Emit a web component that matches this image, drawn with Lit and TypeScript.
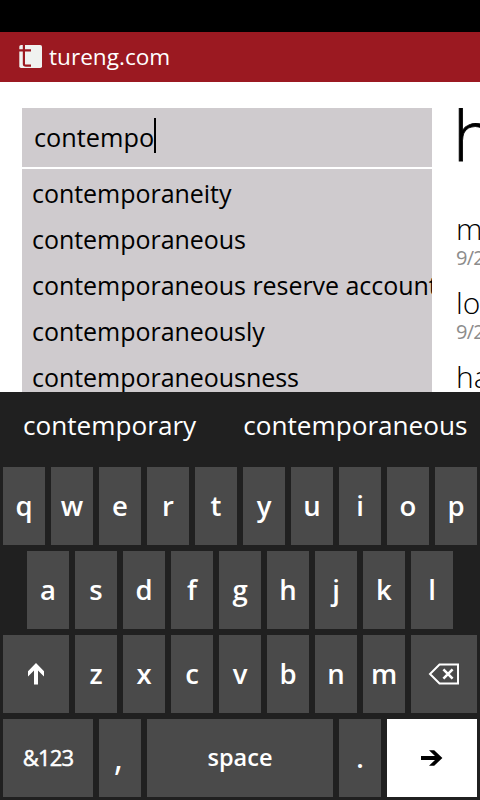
import { LitElement, css, html, svg } from 'lit';
import { customElement, property } from 'lit/decorators.js';

const suggestions = [
  'contemporaneity',
  'contemporaneous',
  'contemporaneous reserve account',
  'contemporaneously',
  'contemporaneousness',
];

const history = [
  { word: 'm', date: '9/2' },
  { word: 'lo', date: '9/2' },
  { word: 'ha', date: '' },
];

const icons: Record<string, unknown> = {
  shift: svg`<svg width="16" height="22" viewBox="0 0 16 22">
    <path d="M8 0 16 8.2V13.4L10 7.4V21.5H6V7.4L0 13.4V8.2Z" fill="#fff" />
  </svg>`,
  backspace: svg`<svg width="32" height="22" viewBox="0 0 32 22">
    <path d="M11.5 1.5H30V20.5H11.5L2 11Z" fill="none" stroke="#fff" stroke-width="2" />
    <path d="M15.4 6.4 24.6 15.6M24.6 6.4 15.4 15.6" stroke="#fff" stroke-width="2.6" />
  </svg>`,
  enter: svg`<svg width="22" height="16" viewBox="0 0 22 16">
    <path d="M0 6H14L8 .3H13.2L21.4 8 13.2 15.7H8L14 10H0Z" fill="#000" />
  </svg>`,
};

@customElement('title-bar')
export class TitleBar extends LitElement {
  render() {
    return html`
      <svg width="24" height="24" viewBox="0 0 24 24">
        <rect x=".3" y="0" width="22.7" height="23" rx="1.8" fill="#f0f2f0" />
        <path d="M0 5.4H12M4.9 0V19Q4.9 20.6 7 20.6H12" fill="none" stroke="#9b1921" stroke-width="2.2" />
      </svg>
      <span class="name">tureng.com</span>
    `;
  }

  static styles = css`
    :host {
      display: flex;
      align-items: center;
      gap: 6px;
      height: 50px;
      padding-left: 19px;
      background: #9b1921;
      color: #fff;
    }

    .name {
      padding-bottom: 2px;
      font-size: 22.6px;
    }
  `;
}

@customElement('search-panel')
export class SearchPanel extends LitElement {
  render() {
    return html`
      <div class="input"><span class="typed">contempo</span><span class="caret"></span></div>
      <div class="list">
        ${suggestions.map((s) => html`<div class="item">${s}</div>`)}
      </div>
    `;
  }

  static styles = css`
    :host {
      display: flex;
      flex-direction: column;
      gap: 2px;
      width: 410px;
      flex: none;
      color: #000;
      font-size: 25px;
    }

    .input {
      display: flex;
      align-items: center;
      height: 59px;
      padding: 0 0 4px 12px;
      background: #cfcbce;
      box-sizing: border-box;
    }

    .typed {
      padding-top: 3px;
      font-size: 25.3px;
    }

    .caret {
      width: 2px;
      height: 35px;
      background: #000;
    }

    .list {
      flex: 1;
      padding: 1px 0 0 10px;
      background: #cfcbce;
      overflow: hidden;
    }

    .item {
      height: 46px;
      line-height: 46px;
      letter-spacing: -0.04px;
      white-space: nowrap;
    }
  `;
}

@customElement('history-panel')
export class HistoryPanel extends LitElement {
  render() {
    return html`
      <div class="title">h</div>
      ${history.map(
        (h) => html`
          <div class="entry">
            <div class="word">${h.word}</div>
            <div class="date">${h.date}</div>
          </div>
        `
      )}
    `;
  }

  static styles = css`
    :host {
      display: block;
      flex: 1;
      min-width: 0;
      overflow: hidden;
      white-space: nowrap;
      font-weight: 300;
    }

    .title {
      height: 103px;
      margin-left: -3px;
      font-size: 70px;
      line-height: 52px;
      -webkit-text-stroke: 0.8px #000;
    }

    .entry {
      height: 74px;
    }

    .word {
      height: 36px;
      font-size: 30px;
      line-height: 36px;
    }

    .date {
      font-size: 20px;
      line-height: 22px;
      letter-spacing: -0.8px;
      color: #8c8c8c;
      font-weight: 400;
    }
  `;
}

@customElement('keyboard-key')
export class KeyboardKey extends LitElement {
  @property() label = '';

  render() {
    return icons[this.label] ?? html`${this.label}`;
  }

  static styles = css`
    :host {
      display: flex;
      align-items: center;
      justify-content: center;
      height: 78px;
      padding-bottom: 1px;
      background: #4a4a4a;
      color: #fff;
      font-size: 27.5px;
      font-weight: 600;
      box-sizing: border-box;
    }

    svg {
      display: block;
    }
  `;
}

@customElement('soft-keyboard')
export class SoftKeyboard extends LitElement {
  renderKeys(keys: string) {
    return [...keys].map((k) => html`<keyboard-key label=${k}></keyboard-key>`);
  }

  render() {
    return html`
      <div class="words">
        <span>contemporary</span>
        <span>contemporaneous</span>
      </div>
      <div class="row">${this.renderKeys('qwertyuiop')}</div>
      <div class="row">${this.renderKeys('asdfghjkl')}</div>
      <div class="row">
        <keyboard-key class="wide" label="shift"></keyboard-key>
        ${this.renderKeys('zxcvbnm')}
        <keyboard-key class="wide" label="backspace"></keyboard-key>
      </div>
      <div class="row">
        <keyboard-key class="mode" label="&amp;123"></keyboard-key>
        <keyboard-key class="comma" label=","></keyboard-key>
        <keyboard-key class="space" label="space"></keyboard-key>
        <keyboard-key label="."></keyboard-key>
        <keyboard-key class="enter" label="enter"></keyboard-key>
      </div>
    `;
  }

  static styles = css`
    :host {
      display: flex;
      flex-direction: column;
      gap: 6px;
      height: 408px;
      background: #202020;
      color: #fff;
    }

    .words {
      display: flex;
      gap: 47px;
      height: 69px;
      padding-left: 23px;
      font-size: 26.15px;
      line-height: 66px;
      white-space: nowrap;
    }

    .row {
      display: flex;
      justify-content: center;
      gap: 6px;
    }

    keyboard-key {
      width: 42px;
    }

    .wide {
      width: 66px;
      padding-bottom: 0;
    }

    .mode {
      width: 90px;
      padding-bottom: 2px;
      font-size: 22px;
      font-weight: 400;
      letter-spacing: -0.8px;
      -webkit-text-stroke: 0.5px #fff;
    }

    .comma {
      padding: 0 3px 4px 0;
      font-size: 36px;
      font-weight: 400;
    }

    .space {
      width: 186px;
      padding-bottom: 3px;
      font-size: 23.5px;
    }

    .enter {
      width: 90px;
      padding-bottom: 0;
      background: #fff;
    }
  `;
}

@customElement('app-root')
export class AppRoot extends LitElement {
  render() {
    return html`
      <div class="status"></div>
      <title-bar></title-bar>
      <div class="content">
        <search-panel></search-panel>
        <history-panel></history-panel>
      </div>
      <soft-keyboard></soft-keyboard>
    `;
  }

  static styles = css`
    :host {
      display: flex;
      flex-direction: column;
      width: 480px;
      height: 800px;
      overflow: hidden;
      background: #fff;
      font-family: 'Open Sans', 'Noto Sans', sans-serif;
    }

    .status {
      height: 32px;
      background: #000;
    }

    .content {
      display: flex;
      gap: 24px;
      height: 310px;
      padding: 26px 0 0 22px;
      box-sizing: border-box;
      overflow: hidden;
    }
  `;
}
